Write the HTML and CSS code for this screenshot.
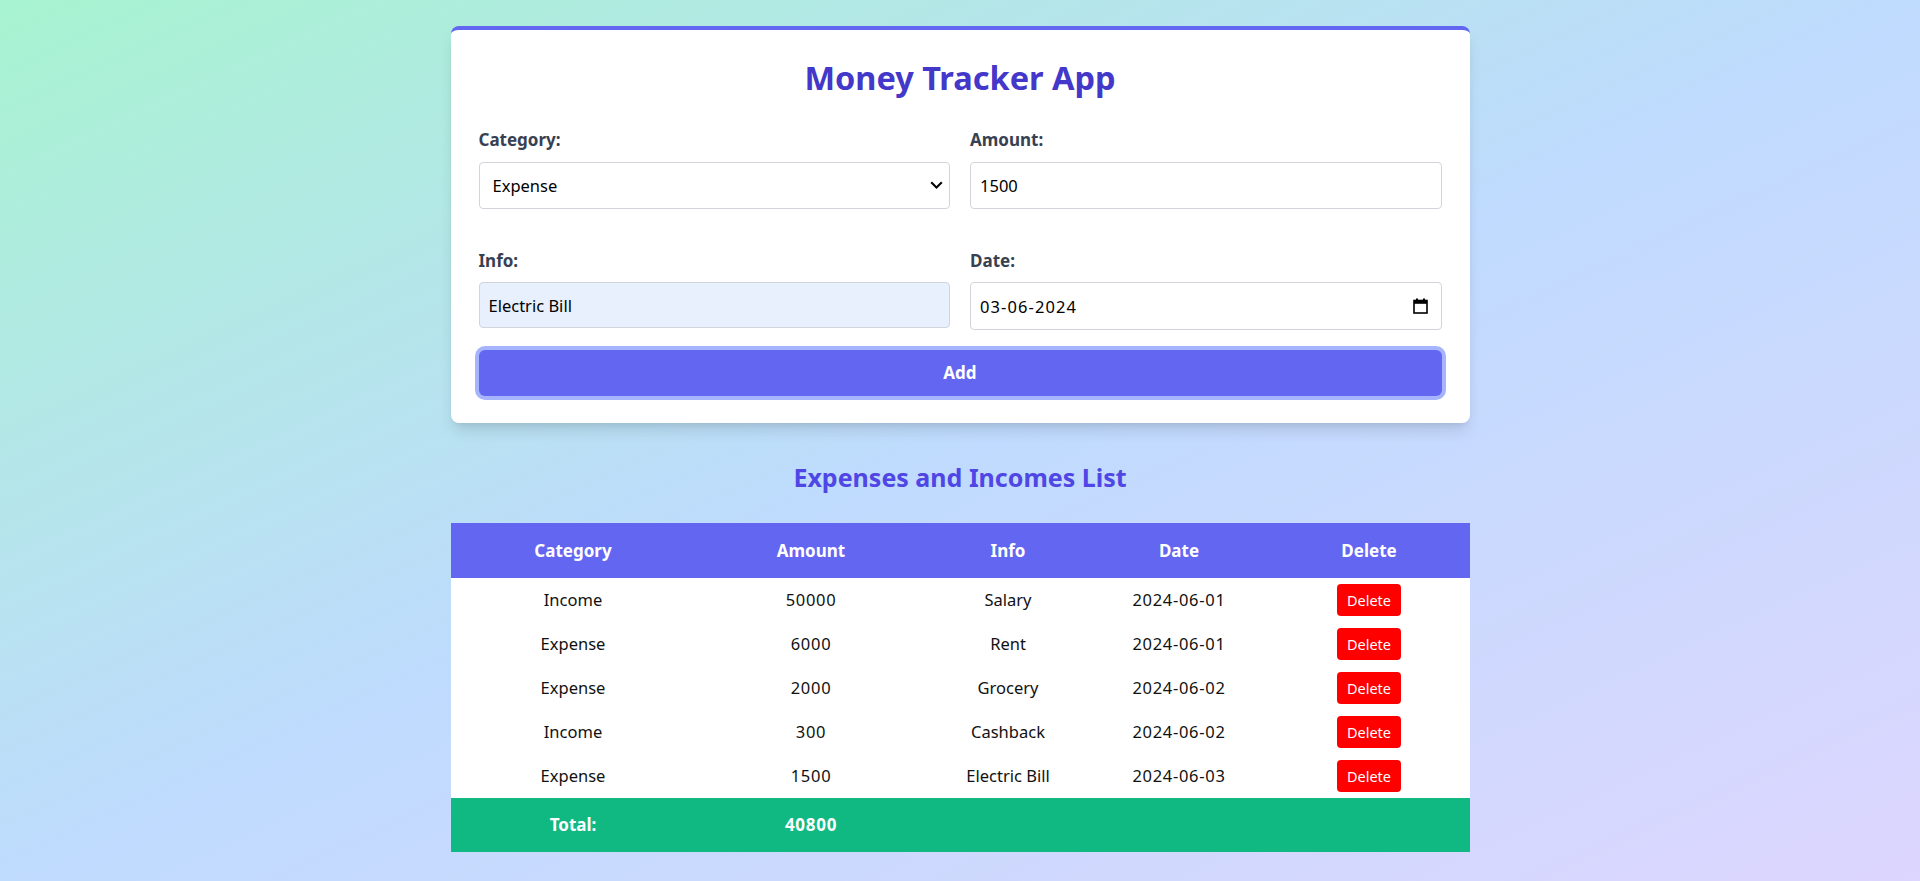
FILE: index.html
```html
<!DOCTYPE html>
<html lang="en">
<head>
<meta charset="utf-8">
<title>Money Tracker App</title>
<link rel="stylesheet" href="styles.css">
</head>
<body>
<main class="page">
  <section class="card">
    <h1 class="title">Money Tracker App</h1>
    <form class="form">
      <div class="grid">
        <div class="field">
          <label class="label" for="category">Category:</label>
          <div class="select-wrap">
            <select id="category" class="control select">
              <option>Income</option>
              <option selected>Expense</option>
            </select>
            <svg class="chevron" width="13" height="8" viewBox="0 0 13 8"><path d="M1.2 1.2l5.3 5.3 5.3-5.3" fill="none" stroke="#000" stroke-width="2"/></svg>
          </div>
        </div>
        <div class="field">
          <label class="label" for="amount">Amount:</label>
          <input id="amount" class="control" type="text" value="1500">
        </div>
        <div class="field">
          <label class="label" for="info">Info:</label>
          <input id="info" class="control control-info" type="text" value="Electric Bill">
        </div>
        <div class="field">
          <label class="label" for="date">Date:</label>
          <div class="date-box">
            <input id="date" class="date-input" type="text" value="03-06-2024">
            <svg class="cal" width="15" height="16" viewBox="0 0 15 16"><rect x="3" y="0.5" width="2" height="3" fill="#000"/><rect x="10" y="0.5" width="2" height="3" fill="#000"/><rect x="1" y="2.5" width="13" height="12.5" fill="none" stroke="#000" stroke-width="1.6"/><rect x="1" y="2.5" width="13" height="3.3" fill="#000"/></svg>
          </div>
        </div>
      </div>
      <button type="button" class="add-btn">Add</button>
    </form>
  </section>

  <h2 class="subtitle">Expenses and Incomes List</h2>

  <table class="list">
    <colgroup>
      <col class="c1"><col class="c2"><col class="c3"><col class="c4"><col class="c5">
    </colgroup>
    <thead>
      <tr><th>Category</th><th>Amount</th><th>Info</th><th>Date</th><th>Delete</th></tr>
    </thead>
    <tbody>
      <tr><td>Income</td><td class="num">50000</td><td>Salary</td><td class="num">2024-06-01</td><td><button type="button" class="del-btn">Delete</button></td></tr>
      <tr><td>Expense</td><td class="num">6000</td><td>Rent</td><td class="num">2024-06-01</td><td><button type="button" class="del-btn">Delete</button></td></tr>
      <tr><td>Expense</td><td class="num">2000</td><td>Grocery</td><td class="num">2024-06-02</td><td><button type="button" class="del-btn">Delete</button></td></tr>
      <tr><td>Income</td><td class="num">300</td><td>Cashback</td><td class="num">2024-06-02</td><td><button type="button" class="del-btn">Delete</button></td></tr>
      <tr><td>Expense</td><td class="num">1500</td><td>Electric Bill</td><td class="num">2024-06-03</td><td><button type="button" class="del-btn">Delete</button></td></tr>
    </tbody>
    <tfoot>
      <tr><td>Total:</td><td class="num">40800</td><td></td><td></td><td></td></tr>
    </tfoot>
  </table>
</main>
</body>
</html>
```

FILE: styles.css
```css
* {
  box-sizing: border-box;
}

html,
body {
  margin: 0;
  padding: 0;
}

body {
  min-height: 100vh;
  font-family: "Noto Sans", "Open Sans", sans-serif;
  color: #111111;
  background: linear-gradient(to bottom right, #a7f3d0, #bfdbfe, #ddd6fe);
}

.page {
  width: 1019px;
  margin: 0 auto;
  padding: 26px 0 29px;
}

.card {
  background: #ffffff;
  border-top: 4px solid #6366f1;
  border-radius: 8px;
  padding: 28px 28px 27px;
  box-shadow: 0 10px 15px -3px rgba(0, 0, 0, 0.12), 0 4px 6px -4px rgba(0, 0, 0, 0.1);
}

.title {
  margin: 0 0 30px;
  text-align: center;
  font-size: 32.5px;
  line-height: 40px;
  font-weight: 700;
  color: #4338ca;
}

.form {
  margin: 0;
}

.grid {
  display: grid;
  grid-template-columns: 1fr 1fr;
  column-gap: 20px;
  row-gap: 40px;
  align-items: start;
}

.field {
  display: flex;
  flex-direction: column;
}

.label {
  display: block;
  font-size: 17px;
  line-height: 24px;
  font-weight: 700;
  color: #374151;
  margin-bottom: 9.5px;
}

.control {
  display: block;
  width: 100%;
  height: 47px;
  margin: 0;
  padding: 0 9px;
  border: 1px solid #d1d5db;
  border-radius: 4px;
  background: #ffffff;
  font-family: inherit;
  font-size: 16.5px;
  color: #000000;
  outline: none;
}

.control-info {
  height: 46px;
  background: #e8f0fe;
}

.select-wrap {
  display: grid;
}

.select {
  grid-area: 1 / 1;
  appearance: none;
  -webkit-appearance: none;
  padding-left: 13px;
}

.chevron {
  grid-area: 1 / 1;
  justify-self: end;
  align-self: center;
  margin-right: 7px;
  pointer-events: none;
}

.date-box {
  display: flex;
  align-items: center;
  height: 48px;
  border: 1px solid #d1d5db;
  border-radius: 4px;
  background: #ffffff;
  padding: 0 13px 0 9px;
}

.date-input {
  flex: 1;
  min-width: 0;
  border: none;
  outline: none;
  padding: 0;
  margin: 0;
  background: transparent;
  font-family: inherit;
  font-size: 16.5px;
  letter-spacing: 1.1px;
  color: #000000;
}

.cal {
  flex: none;
}

.add-btn {
  display: block;
  width: 100%;
  height: 46px;
  margin-top: 19.5px;
  border: none;
  border-radius: 6px;
  background: #6366f1;
  color: #ffffff;
  font-family: inherit;
  font-size: 17px;
  font-weight: 700;
  box-shadow: 0 0 0 4px #a5b4fc;
  cursor: pointer;
}

.subtitle {
  margin: 38px 0 30px;
  text-align: center;
  font-size: 25px;
  line-height: 32px;
  font-weight: 700;
  color: #4f46e5;
}

.list {
  width: 100%;
  border-collapse: collapse;
  table-layout: fixed;
  background: #ffffff;
}

.c1 { width: 245px; }
.c2 { width: 231px; }
.c3 { width: 163px; }
.c4 { width: 179px; }
.c5 { width: 201px; }

.list th {
  background: #6366f1;
  color: #ffffff;
  font-size: 17px;
  line-height: 24px;
  font-weight: 700;
  padding: 16px 8px 15px;
  text-align: center;
}

.list td {
  padding: 6px 8px;
  height: 44px;
  font-size: 16.5px;
  line-height: 24px;
  text-align: center;
  vertical-align: middle;
  color: #111111;
}

.list td.num {
  letter-spacing: 0.7px;
}

.list tfoot td {
  background: #10b981;
  color: #ffffff;
  font-weight: 700;
  font-size: 17px;
  height: 54px;
  padding: 15px 8px;
}

.del-btn {
  display: inline-block;
  height: 32px;
  padding: 0 10px;
  border: none;
  border-radius: 4px;
  background: #ff0000;
  color: #ffffff;
  font-family: inherit;
  font-size: 14.5px;
  line-height: 32px;
  vertical-align: middle;
  cursor: pointer;
}
```
